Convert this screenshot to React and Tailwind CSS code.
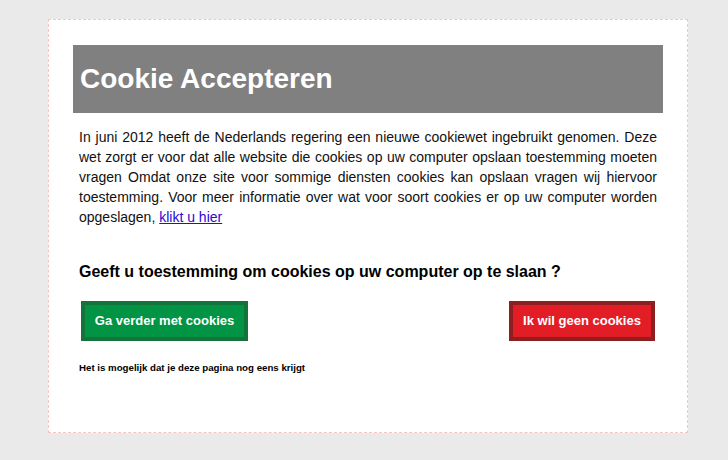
export default function App() {
  return (
    <div className="min-h-[460px] w-[728px] bg-[#e9eae9] pt-[19px] font-['Liberation_Sans',Arial,sans-serif]">
      <div className="ml-[48px] h-[414px] w-[640px] border border-dashed border-[#fbc2c2] bg-white px-[24px] pt-[25px]">
        <div className="flex h-[68px] items-center bg-[#808080] px-[7px]">
          <h1 className="text-[28px] font-bold text-white">Cookie Accepteren</h1>
        </div>

        <div className="px-[6px]">
          <p className="mt-[14px] text-justify text-[14px] leading-[20px] text-[#111]">
            In juni 2012 heeft de Nederlands regering een nieuwe cookiewet ingebruikt genomen. Deze
            wet zorgt er voor dat alle website die cookies op uw computer opslaan toestemming moeten
            vragen Omdat onze site voor sommige diensten cookies kan opslaan vragen wij hiervoor
            toestemming. Voor meer informatie over wat voor soort cookies er op uw computer worden
            opgeslagen,{' '}
            <a href="#" className="text-[#2a0ad6] underline">
              klikt u hier
            </a>
          </p>

          <h2 className="mt-[33px] text-[16px] font-bold text-black">
            Geeft u toestemming om cookies op uw computer op te slaan ?
          </h2>

          <div className="mt-[17px] flex items-center justify-between px-[2px]">
            <button className="h-[40px] w-[167px] border-4 border-[#13733a] bg-[#009444] text-[13px] font-bold text-white">
              Ga verder met cookies
            </button>
            <button className="h-[40px] w-[146px] border-4 border-[#8e1f20] bg-[#e21d26] text-[13px] font-bold text-white">
              Ik wil geen cookies
            </button>
          </div>

          <p className="mt-[20px] text-[9.7px] leading-[14px] font-bold text-black">
            Het is mogelijk dat je deze pagina nog eens krijgt
          </p>
        </div>
      </div>
    </div>
  )
}
